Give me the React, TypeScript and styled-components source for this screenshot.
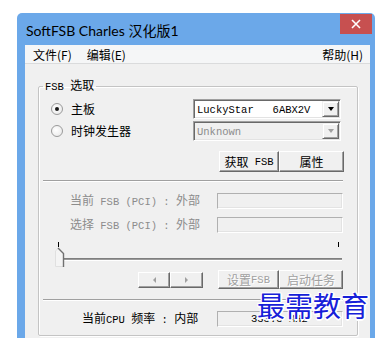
import React from "react";
import styled, { createGlobalStyle } from "styled-components";

const GlobalStyle = createGlobalStyle`
  html, body {
    margin: 0;
    padding: 0;
    background: #ffffff;
    overflow: hidden;
  }
  body {
    width: 381px;
    height: 338px;
  }
`;

const cjk = `"Noto Sans CJK SC", "Microsoft YaHei", sans-serif`;

const Page = styled.div`
  padding: 13px 0 0 17px;
`;

const Window = styled.div`
  position: relative;
  width: 358px;
  height: 325px;
  background: #6ba8e9;
  border-radius: 5px 5px 0 0;
  display: flex;
  flex-direction: column;
`;

const TitleBar = styled.div`
  height: 32px;
  flex-shrink: 0;
  display: flex;
  align-items: center;
  justify-content: space-between;
  padding: 0 3px 0 9px;
`;

const Title = styled.div`
  font-family: Lato, ${cjk};
  font-size: 14px;
  color: #000;
  margin-top: 1px;
`;

const CloseButton = styled.div`
  align-self: flex-start;
  margin-top: 1px;
  width: 32px;
  height: 20px;
  background: #c75050;
  display: flex;
  align-items: center;
  justify-content: center;
`;

const Frame = styled.div`
  flex: 1;
  display: flex;
  flex-direction: column;
  padding: 0 5px 0 8px;
  min-height: 0;
`;

const MenuBar = styled.div`
  height: 18px;
  flex-shrink: 0;
  background: #f5f6f7;
  border-bottom: 1px solid #dadbdc;
  display: flex;
  align-items: center;
  padding: 0 7px 0 8px;
  font-family: ${cjk};
  font-size: 12px;
  color: #000;
`;

const MenuItem = styled.span<{ $push?: boolean }>`
  margin-right: ${(p) => (p.$push ? "0" : "15px")};
  margin-left: ${(p) => (p.$push ? "auto" : "0")};
`;

const Client = styled.div`
  flex: 1;
  min-height: 0;
  background: #f0f0f0;
  padding: 14px 0 0 13px;
`;

const Group = styled.fieldset`
  box-sizing: border-box;
  width: 320px;
  margin: 0;
  padding: 0 13px 7px 4px;
  border: 1px solid #c4c4c4;
  border-radius: 2px;
  box-shadow: 1px 1px 0 #fff, inset 1px 1px 0 #fff;
  font-family: ${cjk};
  font-size: 12px;
`;

const Legend = styled.legend`
  padding: 0 2px;
  line-height: 14px;
  color: #000;
`;

const Mono = styled.span`
  font-family: "Liberation Mono", monospace;
  font-size: 10.5px;
  white-space: pre;
`;

const Row = styled.div<{ $top: number }>`
  margin-top: ${(p) => p.$top}px;
  display: grid;
  grid-template-columns: 150px 148px;
  align-items: center;
`;

const RadioLabel = styled.label`
  display: flex;
  align-items: center;
  padding-left: 8px;
  gap: 8px;
  color: #000;
  line-height: 16px;
`;

const RadioDot = styled.span<{ $on?: boolean }>`
  box-sizing: border-box;
  width: 12px;
  height: 12px;
  border-radius: 50%;
  border: 1px solid #9a9a9a;
  background: radial-gradient(circle at 40% 40%, #ffffff 0%, #e6e6e6 100%);
  display: flex;
  align-items: center;
  justify-content: center;
  &::after {
    content: "";
    width: 4px;
    height: 4px;
    border-radius: 50%;
    background: ${(p) => (p.$on ? "#1a1a1a" : "transparent")};
  }
`;

const Combo = styled.div<{ $off?: boolean }>`
  box-sizing: border-box;
  height: 20px;
  display: flex;
  align-items: center;
  border: 1px solid;
  border-color: #a0a0a0 #ffffff #ffffff #a0a0a0;
  box-shadow: inset 1px 1px 0 #696969, inset -1px -1px 0 #e3e3e3;
  background: ${(p) => (p.$off ? "#f0f0f0" : "#ffffff")};
  padding: 1px 1px 1px 3px;
  color: ${(p) => (p.$off ? "#8c8c8c" : "#000")};
`;

const ComboText = styled.span`
  flex: 1;
  font-family: "Liberation Mono", monospace;
  font-size: 10.5px;
  white-space: pre;
  padding-top: 1px;
`;

const DropButton = styled.span<{ $off?: boolean }>`
  box-sizing: border-box;
  width: 17px;
  height: 16px;
  background: #f0f0f0;
  border: 1px solid;
  border-color: #f0f0f0 #696969 #696969 #f0f0f0;
  box-shadow: inset 1px 1px 0 #fff, inset -1px -1px 0 #a0a0a0;
  display: flex;
  align-items: center;
  justify-content: center;
  &::after {
    content: "";
    border-left: 3.5px solid transparent;
    border-right: 3.5px solid transparent;
    border-top: 4px solid ${(p) => (p.$off ? "#a0a0a0" : "#000")};
  }
`;

const ButtonRow = styled.div<{ $top: number; $pad: number }>`
  margin-top: ${(p) => p.$top}px;
  padding-left: ${(p) => p.$pad}px;
  display: flex;
  align-items: center;
`;

const Button = styled.button<{ $w: number; $h: number; $off?: boolean; $gap?: number }>`
  box-sizing: border-box;
  width: ${(p) => p.$w}px;
  height: ${(p) => p.$h}px;
  padding: 0;
  margin: 0 0 0 ${(p) => p.$gap ?? 0}px;
  background: #f0f0f0;
  border: 1px solid;
  border-color: #ffffff #696969 #696969 #ffffff;
  box-shadow: inset -1px -1px 0 #a0a0a0, inset 1px 1px 0 #f0f0f0;
  font-family: ${cjk};
  font-size: 12px;
  line-height: 14px;
  color: ${(p) => (p.$off ? "#a0a0a0" : "#000")};
  text-shadow: ${(p) => (p.$off ? "1px 1px 0 #ffffff" : "none")};
  display: flex;
  align-items: center;
  justify-content: center;
`;

const Arrow = styled.span<{ $dir: "left" | "right" }>`
  width: 0;
  height: 0;
  border-top: 3px solid transparent;
  border-bottom: 3px solid transparent;
  ${(p) =>
    p.$dir === "left"
      ? "border-right: 3px solid #a0a0a0;"
      : "border-left: 3px solid #a0a0a0;"}
`;

const Separator = styled.div<{ $top: number }>`
  margin-top: ${(p) => p.$top}px;
  width: 300px;
  height: 0;
  border-top: 1px solid #a0a0a0;
  border-bottom: 1px solid #ffffff;
`;

const FieldRow = styled.div<{ $top: number; $pad: number }>`
  margin-top: ${(p) => p.$top}px;
  display: grid;
  grid-template-columns: 174px 126px;
  align-items: center;
  & > span {
    padding-left: ${(p) => p.$pad}px;
  }
`;

const FieldLabel = styled.span<{ $off?: boolean }>`
  color: ${(p) => (p.$off ? "#8c8c8c" : "#000")};
  line-height: 16px;
  white-space: nowrap;
`;

const Field = styled.div`
  box-sizing: border-box;
  height: 16px;
  border: 1px solid;
  border-color: #b0b0b0 #ffffff #ffffff #b0b0b0;
  box-shadow: inset -1px -1px 0 #e3e3e3;
  background: #f0f0f0;
  padding-left: 33px;
  display: flex;
  align-items: center;
  color: #000;
`;

const Slider = styled.div`
  position: relative;
  margin-top: 8px;
  width: 300px;
  height: 26px;
`;

const Tick = styled.span<{ $x: number }>`
  position: absolute;
  left: ${(p) => p.$x}px;
  top: 0;
  width: 1px;
  height: 5px;
  background: #000;
`;

const Track = styled.div`
  position: absolute;
  left: 20px;
  right: 1px;
  top: 16px;
  height: 1px;
  border-top: 1px solid #7f7f7f;
  background: #9a9a9a;
  border-bottom: 1px solid #ffffff;
`;

const Thumb = styled.svg`
  position: absolute;
  left: 12px;
  top: 3px;
`;

const Watermark = styled.div`
  position: absolute;
  left: 240px;
  top: 278px;
  font-family: ${cjk};
  font-size: 28px;
  line-height: 28px;
  color: #1620d8;
  text-shadow: -1px -1px 0 #fff, 1px -1px 0 #fff, -1px 1px 0 #fff,
    1px 1px 0 #fff, 0 2px 0 #fff, 2px 0 0 #fff;
`;

export default function App() {
  return (
    <>
      <GlobalStyle />
      <Page>
        <Window>
          <TitleBar>
            <Title>SoftFSB Charles 汉化版1</Title>
            <CloseButton>
              <svg width="10" height="10" viewBox="0 0 10 10">
                <path d="M1 1 L9 9 M9 1 L1 9" stroke="#fff" strokeWidth="1.6" />
              </svg>
            </CloseButton>
          </TitleBar>
          <Frame>
            <MenuBar>
              <MenuItem>文件(F)</MenuItem>
              <MenuItem>编辑(E)</MenuItem>
              <MenuItem $push>帮助(H)</MenuItem>
            </MenuBar>
            <Client>
              <Group>
                <Legend>
                  <Mono>FSB </Mono>选取
                </Legend>
                <Row $top={5}>
                  <RadioLabel>
                    <RadioDot $on />
                    主板
                  </RadioLabel>
                  <Combo>
                    <ComboText>LuckyStar   6ABX2V</ComboText>
                    <DropButton />
                  </Combo>
                </Row>
                <Row $top={2}>
                  <RadioLabel>
                    <RadioDot />
                    时钟发生器
                  </RadioLabel>
                  <Combo $off>
                    <ComboText>Unknown</ComboText>
                    <DropButton $off />
                  </Combo>
                </Row>
                <ButtonRow $top={10} $pad={176}>
                  <Button $w={60} $h={21}>
                    获取<Mono> FSB</Mono>
                  </Button>
                  <Button $w={65} $h={21}>
                    属性
                  </Button>
                </ButtonRow>
                <Separator $top={8} />
                <FieldRow $top={10} $pad={27}>
                  <FieldLabel $off>
                    当前<Mono> FSB (PCI) : </Mono>外部
                  </FieldLabel>
                  <Field />
                </FieldRow>
                <FieldRow $top={6} $pad={27}>
                  <FieldLabel $off>
                    选择<Mono> FSB (PCI) : </Mono>外部
                  </FieldLabel>
                  <Field />
                </FieldRow>
                <Slider>
                  <Tick $x={15} />
                  <Tick $x={295} />
                  <Track />
                  <Thumb width="10" height="22" viewBox="0 0 10 22">
                    <polygon
                      points="0.5,21.5 0.5,6 3,3.5 8.5,9 8.5,21.5"
                      fill="#f4f4f4"
                      stroke="#e0e0e0"
                    />
                    <path d="M3 3 L8.5 8.5 L8.5 22" stroke="#707070" fill="none" strokeWidth="1.4" />
                  </Thumb>
                </Slider>
                <ButtonRow $top={2} $pad={95}>
                  <Button $w={32} $h={16} $off>
                    <Arrow $dir="left" />
                  </Button>
                  <Button $w={33} $h={16} $off>
                    <Arrow $dir="right" />
                  </Button>
                  <Button $w={61} $h={19} $off $gap={15}>
                    设置<Mono>FSB</Mono>
                  </Button>
                  <Button $w={64} $h={19} $off>
                    启动任务
                  </Button>
                </ButtonRow>
                <Separator $top={10} />
                <FieldRow $top={9} $pad={39}>
                  <FieldLabel>
                    当前<Mono>CPU </Mono>频率<Mono> : </Mono>内部
                  </FieldLabel>
                  <Field>
                    <Mono>333.3 MHz</Mono>
                  </Field>
                </FieldRow>
              </Group>
            </Client>
          </Frame>
          <Watermark>最需教育</Watermark>
        </Window>
      </Page>
    </>
  );
}
